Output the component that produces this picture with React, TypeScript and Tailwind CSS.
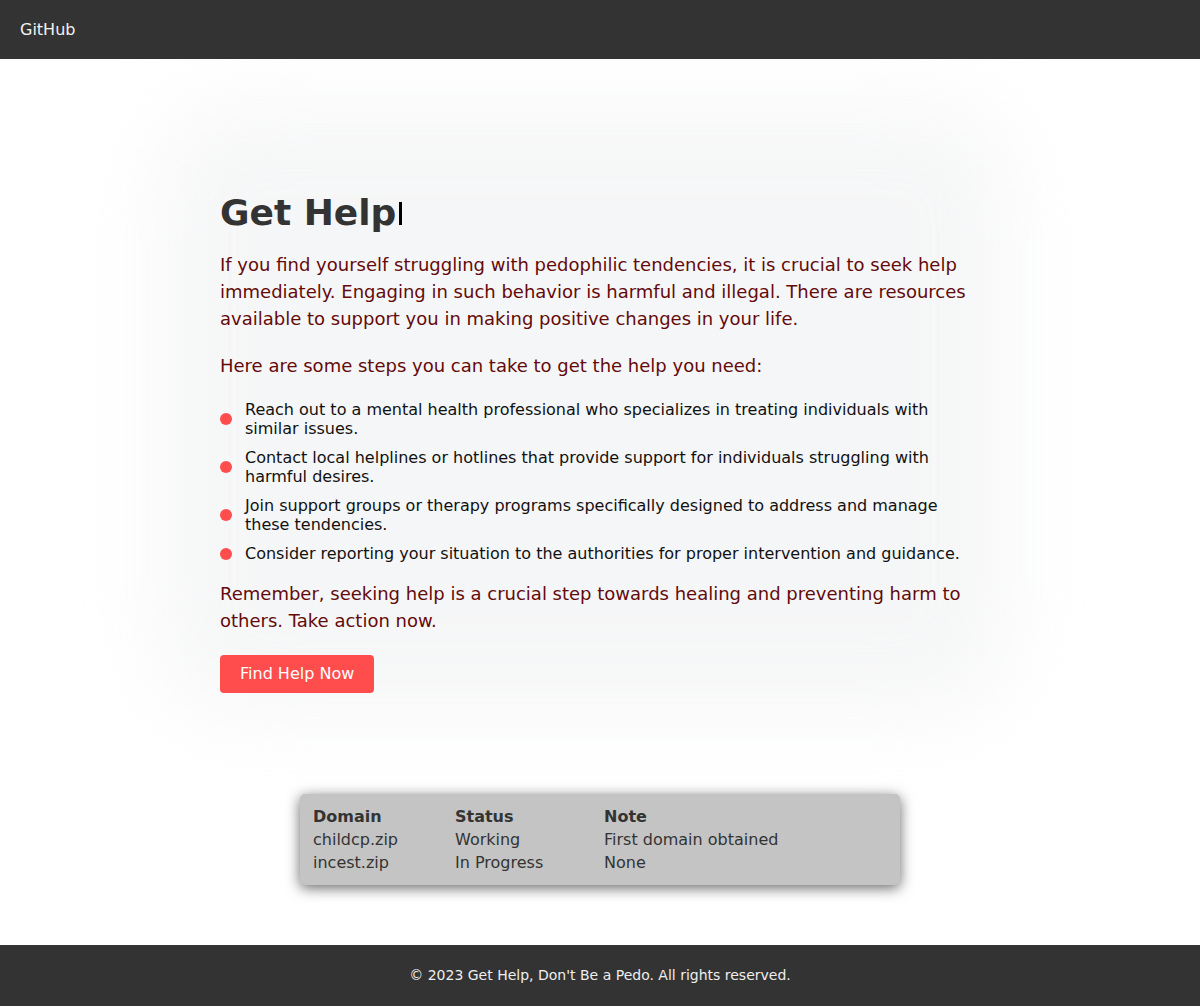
import React from "react";

export default function App() {
  const steps = [
    "Reach out to a mental health professional who specializes in treating individuals with similar issues.",
    "Contact local helplines or hotlines that provide support for individuals struggling with harmful desires.",
    "Join support groups or therapy programs specifically designed to address and manage these tendencies.",
    "Consider reporting your situation to the authorities for proper intervention and guidance.",
  ];
  const rows = [
    ["childcp.zip", "Working", "First domain obtained"],
    ["incest.zip", "In Progress", "None"],
  ];
  return (
    <div className="flex min-h-screen flex-col overflow-hidden bg-white font-['DejaVu_Sans',sans-serif]">
      <header className="relative z-10 flex h-[59px] items-center bg-[#333333] px-5 text-[16px] text-[#f2f2f2]">
        GitHub
      </header>

      <main className="relative z-0 flex flex-1 flex-col items-center">
        <section className="relative isolate mt-[113px] w-[800px] p-5">
          <div className="pointer-events-none absolute -left-10 -right-2 -top-16 bottom-0 -z-10 rounded-[80px] bg-[#f2f3f4] opacity-70 blur-[40px]" />
          <h1 className="flex items-center text-[36px] font-bold leading-[42px] text-[#333333]">
            Get Help
            <span className="ml-[3px] inline-block h-[23px] w-[3px] bg-black" />
          </h1>
          <p className="mt-[17px] text-[18px] leading-[27px] text-[#640a0a]">
            If you find yourself struggling with pedophilic tendencies, it is crucial to seek help immediately. Engaging in such behavior is harmful and illegal. There are resources available to support you in making positive changes in your life.
          </p>
          <p className="mt-5 text-[18px] leading-[27px] text-[#640a0a]">
            Here are some steps you can take to get the help you need:
          </p>
          <ul className="mt-[21px] mb-[17px] flex flex-col gap-[10px]">
            {steps.map((s) => (
              <li key={s} className="flex items-center gap-[13px] text-[16px] leading-[19px] text-[#111111]">
                <span className="h-3 w-3 shrink-0 rounded-full bg-[#ff4d4d]" />
                <span>{s}</span>
              </li>
            ))}
          </ul>
          <p className="text-[18px] leading-[27px] text-[#640a0a]">
            Remember, seeking help is a crucial step towards healing and preventing harm to others. Take action now.
          </p>
          <button className="mt-[21px] h-[38px] rounded-[4px] bg-[#ff4d4d] px-5 text-[16px] text-white">
            Find Help Now
          </button>
        </section>

        <div className="mt-[81px] w-[600px] rounded-[5px] bg-[#c4c4c4] p-[10px] text-[16px] text-[#333333] shadow-[0_3px_14px_rgba(0,0,0,0.6)]">
          <table className="w-full table-fixed border-separate border-spacing-[2px] text-left">
            <thead>
              <tr className="leading-[19px]">
                <th className="w-[140px] p-px font-bold">Domain</th>
                <th className="w-[147px] p-px font-bold">Status</th>
                <th className="p-px font-bold">Note</th>
              </tr>
            </thead>
            <tbody>
              {rows.map((r) => (
                <tr key={r[0]} className="leading-[19px]">
                  {r.map((c) => (
                    <td key={c} className="p-px">{c}</td>
                  ))}
                </tr>
              ))}
            </tbody>
          </table>
        </div>
        <div className="flex-1" />
      </main>

      <footer className="relative z-10 mt-[59px] flex h-[61px] items-center justify-center bg-[#333333] text-[14px] text-[#eeeeee]">
        © 2023 Get Help, Don't Be a Pedo. All rights reserved.
      </footer>
    </div>
  );
}
